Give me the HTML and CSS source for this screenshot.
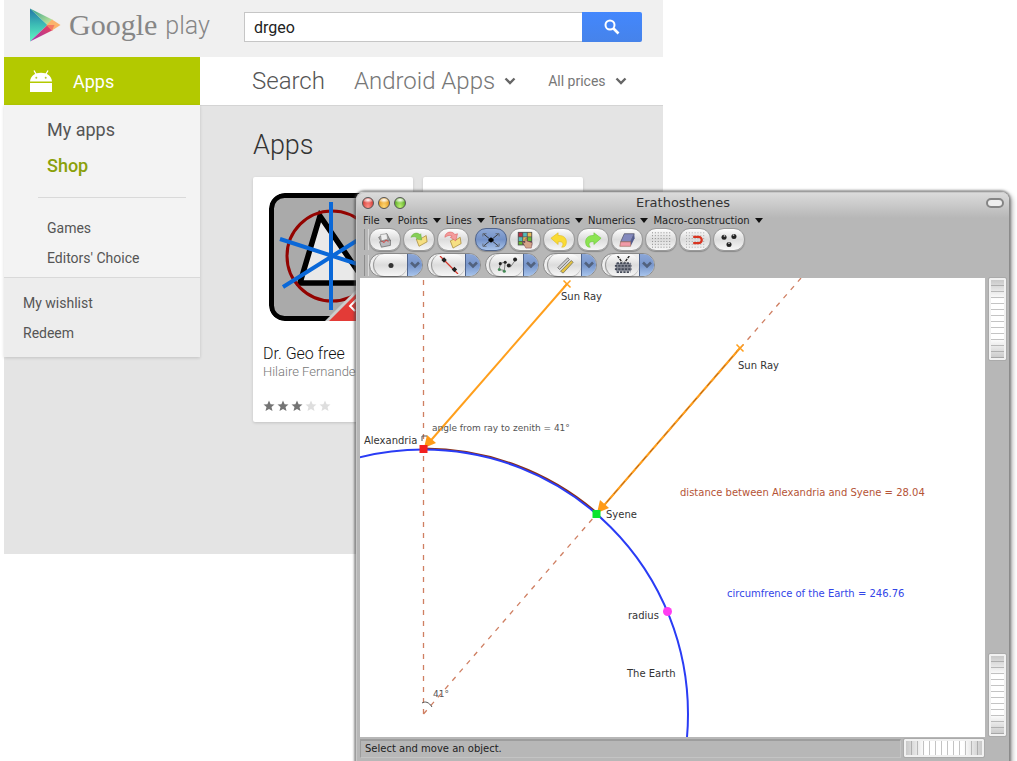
FILE: index.html
```html
<!DOCTYPE html>
<html lang="en">
<head>
<meta charset="utf-8">
<title>Dr. Geo</title>
<link rel="stylesheet" href="styles.css">
</head>
<body>
<div class="desktop">
  <div class="store">
    <header class="store-header">
      <a class="brand" href="#">
        <svg class="brand-mark" viewBox="0 0 32 34" aria-hidden="true">
          <defs>
            <linearGradient id="teal" x1="0" y1="0" x2="0" y2="1"><stop offset="0" stop-color="#2175a8"/><stop offset=".5" stop-color="#3dbdb5"/><stop offset="1" stop-color="#62f5c4"/></linearGradient>
            <linearGradient id="lime" x1="0" y1="0" x2="1" y2="1"><stop offset="0" stop-color="#2a9c8c"/><stop offset="1" stop-color="#d2ee9a"/></linearGradient>
            <linearGradient id="rose" x1="1" y1="0" x2="0" y2="1"><stop offset="0" stop-color="#ee4054"/><stop offset="1" stop-color="#9a35b5"/></linearGradient>
          </defs>
          <path d="M1 .5 18.500 17 1 33.500Z" fill="url(#teal)"/>
          <path d="M1 .5 24 12 18.500 17Z" fill="url(#lime)"/>
          <path d="M1 33.500 18.500 17 24 22Z" fill="url(#rose)"/>
          <path d="M23 11.500 31.500 17 23 22.500 17.500 17Z" fill="#fbb46c"/>
          <path d="M17.500 17h8L23 22.500Z" fill="#f27a62"/>
        </svg>
        <span class="brand-google">Google</span>
        <span class="brand-play">play</span>
      </a>
      <form class="search">
        <input class="search-input" type="text" value="drgeo" aria-label="Search">
        <button class="search-button" type="button" aria-label="Search">
          <svg viewBox="0 0 16 16" width="16" height="16" fill="none" stroke="#fff"><circle cx="6" cy="6" r="4.500" stroke-width="2"/><path d="m9.500 9.500 5 5" stroke-width="2.600"/></svg>
        </button>
      </form>
    </header>
    <div class="store-nav">
      <a class="nav-apps" href="#">
        <svg viewBox="0 0 22 22" width="22" height="22" fill="#fff" aria-hidden="true"><path d="M0 11.500C.5 6 5 2.800 11 2.800S21.500 6 22 11.500z"/><path d="M0 13h22v9H0z"/><path d="m4 .5 2.500 4.500M18 .5 15.500 5" stroke="#fff" stroke-width="1.300"/><circle cx="6.300" cy="7.800" r="1" fill="#b3c833"/><circle cx="15.700" cy="7.800" r="1" fill="#b3c833"/></svg>
        Apps
      </a>
      <div class="filters">
        <span class="filter-title">Search</span>
        <button class="filter filter-large" type="button">Android Apps
          <svg class="chevron" viewBox="0 0 12 8"><path d="m1.500 1.500 4.500 4.500 4.500-4.500"/></svg></button>
        <button class="filter filter-small" type="button">All prices
          <svg class="chevron" viewBox="0 0 12 8"><path d="m1.500 1.500 4.500 4.500 4.500-4.500"/></svg></button>
      </div>
    </div>
    <div class="store-body">
      <nav class="sidebar">
        <div class="side-main">
          <a class="side-link side-big" href="#">My apps</a>
          <a class="side-link side-big side-current" href="#">Shop</a>
          <hr class="side-rule">
          <a class="side-link" href="#">Games</a>
          <a class="side-link" href="#">Editors' Choice</a>
        </div>
        <div class="side-extra">
          <a class="side-link" href="#">My wishlist</a>
          <a class="side-link" href="#">Redeem</a>
        </div>
      </nav>
      <main class="results">
        <h1 class="results-title">Apps</h1>
        <div class="cards">
          <article class="card">
            <svg class="app-icon" viewBox="0 0 128 128" aria-hidden="true">
              <defs><clipPath id="tile"><rect width="128" height="128" rx="16"/></clipPath></defs>
              <g clip-path="url(#tile)">
                <rect x="2.500" y="2.500" width="123" height="123" rx="13" fill="#aaa" stroke="#000" stroke-width="5"/>
                <path d="M51 23 31 90h66z" fill="#e9e9e9" stroke="#000" stroke-width="5.500"/>
                <circle cx="63" cy="63" r="45" fill="none" stroke="#930300" stroke-width="3"/>
                <path d="M62 9v108M11 46 110 78M14 94 108 35" stroke="#0a68d8" stroke-width="4"/>
                <path d="M56 128 128 56v72z" fill="#ccc"/><path d="M60 128 128 60v68z" fill="#e33b37"/>
                <path d="m88 106-7 7 5 5m-5-5 9-9" fill="none" stroke="#fff" stroke-width="2"/>
              </g>
            </svg>
            <h2 class="app-name">Dr. Geo free</h2>
            <p class="app-author">Hilaire Fernandes</p>
            <div class="stars" role="img" aria-label="3 of 5 stars">
              <svg class="star" viewBox="0 0 12 12"><path d="m6 .5 1.600 3.700 3.900.3-3 2.600 1 3.900L6 8.900 2.500 11l1-3.900-3-2.600 3.900-.3z"/></svg>
              <svg class="star" viewBox="0 0 12 12"><path d="m6 .5 1.600 3.700 3.900.3-3 2.600 1 3.900L6 8.900 2.500 11l1-3.900-3-2.600 3.900-.3z"/></svg>
              <svg class="star" viewBox="0 0 12 12"><path d="m6 .5 1.600 3.700 3.900.3-3 2.600 1 3.900L6 8.900 2.500 11l1-3.900-3-2.600 3.900-.3z"/></svg>
              <svg class="star star-off" viewBox="0 0 12 12"><path d="m6 .5 1.600 3.700 3.900.3-3 2.600 1 3.900L6 8.900 2.500 11l1-3.900-3-2.600 3.900-.3z"/></svg>
              <svg class="star star-off" viewBox="0 0 12 12"><path d="m6 .5 1.600 3.700 3.900.3-3 2.600 1 3.900L6 8.900 2.500 11l1-3.900-3-2.600 3.900-.3z"/></svg>
            </div>
          </article>
          <article class="card"></article>
        </div>
      </main>
    </div>
  </div>

  <section class="window">
    <div class="titlebar">
      <div class="lights">
        <button class="light light-red" type="button" aria-label="Close"></button>
        <button class="light light-amber" type="button" aria-label="Minimise"></button>
        <button class="light light-green" type="button" aria-label="Zoom"></button>
      </div>
      <h2 class="window-title">Erathosthenes</h2>
      <button class="window-pill" type="button" aria-label="Toggle toolbar"></button>
    </div>
    <div class="menubar">
      <button class="menu" type="button">File</button>
      <button class="menu" type="button">Points</button>
      <button class="menu" type="button">Lines</button>
      <button class="menu" type="button">Transformations</button>
      <button class="menu" type="button">Numerics</button>
      <button class="menu" type="button">Macro-construction</button>
    </div>
    <div class="toolbar">
      <button class="tool" type="button" aria-label="New"><svg viewBox="0 0 24 20"><path d="m5 7 9-4 4 8-8 5z" fill="#aaa" stroke="#777"/><path d="m7 4 7-1 1 6-7 2z" fill="#eee" stroke="#888" stroke-width=".7"/><path d="m6 12 12-2v6l-10 2z" fill="#b9b9bd" stroke="#666" stroke-width=".8"/><path d="m8 11 3 2 2-3 3 2" fill="none" stroke="#d44"/></svg></button>
      <button class="tool" type="button" aria-label="Open"><svg viewBox="0 0 24 20"><path d="m9 9 4-2 2 1 5-3 1 7-9 5z" fill="#f6df82" stroke="#a48632" stroke-width=".8"/><path d="M3 7c2-5 7-6 10-3l1-1 1 7-6-1 1-1c-2-2-4-2-7-1z" fill="#85cf55" stroke="#61a83b" stroke-width=".5"/></svg></button>
      <button class="tool" type="button" aria-label="Save"><svg viewBox="0 0 24 20"><path d="m9 11 4-2 2 1 5-3 1 7-9 5z" fill="#f6df82" stroke="#a48632" stroke-width=".8"/><path d="M3 7C3 1 11-1 14 4l3-1-2 8-6-4 2-1C9 4 6 5 3 7z" fill="#f49c9c" stroke="#dc5c5c" stroke-width=".6"/></svg></button>
      <button class="tool tool-active" type="button" aria-label="Move"><svg viewBox="0 0 24 20"><path d="M4 3.500 20 16.500M4 16.500 20 3.500" stroke="#333"/><path d="m12 7 3.500 3-3.500 3-3.500-3z" fill="#000"/><path d="M3 6V3h4M21 6V3h-4M3 14v3h4M21 14v3h-4" fill="none" stroke="#555" stroke-width=".8"/></svg></button>
      <button class="tool" type="button" aria-label="Style"><svg viewBox="0 0 24 20"><path fill="#555" d="M4 1h16v15H4z"/><path fill="#b34" d="M5 2h4v4H5z"/><path fill="#5bb" d="M10 2h4v4h-4zM5 7h4v4H5z"/><path fill="#e6b958" d="M15 2h4v4h-4zM10 7h4v4h-4z"/><path fill="#6b3" d="M5 12h4v3H5zM15 7h4v4h-4z"/><path d="m9 12 3 1V9l2-1v3l6 2-1 6h-6z" fill="#d3a58a" stroke="#734" stroke-width=".5"/></svg></button>
      <button class="tool" type="button" aria-label="Undo"><svg viewBox="0 0 24 20"><path d="m3 8 8-6v3c7-.5 10 4 9 9-.5 3-2 4-5 4 3-4 1-7-4-6v3z" fill="#fadb35" stroke="#e0bc23" stroke-width=".7"/></svg></button>
      <button class="tool" type="button" aria-label="Redo"><svg viewBox="0 0 24 20"><path d="m21 8-8-6v3C6 4.500 3 9 4 14c.5 3 2 4 5 4-3-4-1-7 4-6v3z" fill="#8ce452" stroke="#6cc83b" stroke-width=".7"/></svg></button>
      <button class="tool" type="button" aria-label="Erase"><svg viewBox="0 0 24 20"><path d="M9 3h11l-4 9H5z" fill="#8389bd" stroke="#445" stroke-width=".7"/><path d="m20 3 .5 5-4.500 9v-5z" fill="#515a8e"/><path d="M5 12h11v5H4z" fill="#f09aa8" stroke="#965" stroke-width=".7"/></svg></button>
      <button class="tool" type="button" aria-label="Grid"><svg viewBox="0 0 24 20"><path d="M2 2h21M2 5.200h21M2 8.400h21M2 11.600h21M2 14.800h21M2 18h21" stroke="#777" stroke-dasharray="1 2.200"/></svg></button>
      <button class="tool" type="button" aria-label="Snap to grid"><svg viewBox="0 0 24 20"><path d="M2 2h21M2 5.200h21M2 8.400h21M2 11.600h21M2 14.800h21M2 18h21" stroke="#999" stroke-dasharray="1 2.200"/><path d="M10 6.500h6a3.500 3.500 0 0 1 0 7h-6" fill="none" stroke="#d93420" stroke-width="2.500"/></svg></button>
      <button class="tool" type="button" aria-label="Points"><svg viewBox="0 0 24 20"><g fill="#222"><circle cx="6.500" cy="7" r="2.800"/><circle cx="17.500" cy="6" r="2.800"/><circle cx="12" cy="15" r="2.800"/></g><g fill="#bbb"><circle cx="7" cy="5.500" r="1"/><circle cx="17" cy="4.500" r="1"/><circle cx="12" cy="13.500" r="1"/></g></svg></button>
    </div>
    <div class="toolbar toolbar-split">
      <div class="split"><button class="split-main" type="button" aria-label="Point"><svg viewBox="0 0 24 20"><circle cx="12" cy="10.500" r="2.800" fill="#333"/></svg></button><button class="split-arrow" type="button" aria-label="More points"><svg viewBox="0 0 12 8"><path d="m2 1.500 4 4 4-4"/></svg></button></div>
      <div class="split"><button class="split-main" type="button" aria-label="Line"><svg viewBox="0 0 24 20"><path d="m2 0 20 20" stroke="#d23528" stroke-width="1.400"/><g fill="#222"><path d="m6.500 1.500 3 3-3 3-3-3zM18 12l3 3-3 3-3-3z"/></g></svg></button><button class="split-arrow" type="button" aria-label="More lines"><svg viewBox="0 0 12 8"><path d="m2 1.500 4 4 4-4"/></svg></button></div>
      <div class="split"><button class="split-main" type="button" aria-label="Transformation"><svg viewBox="0 0 24 20"><path d="m3 15 2-7 5-1-1 9zM13 10l3 2 5-7" fill="none" stroke="#777"/><g fill="#222"><circle cx="4.500" cy="8.500" r="1.700"/><circle cx="10" cy="7" r="1.700"/><circle cx="14" cy="10.500" r="2.200"/><circle cx="21" cy="4" r="2.200"/></g><circle cx="3.500" cy="15" r="1.700" fill="#485"/><circle cx="9" cy="17" r="1.700" fill="#485"/></svg></button><button class="split-arrow" type="button" aria-label="More transformations"><svg viewBox="0 0 12 8"><path d="m2 1.500 4 4 4-4"/></svg></button></div>
      <div class="split"><button class="split-main" type="button" aria-label="Measure"><svg viewBox="0 0 24 20"><path d="m4 13 11-11 2 2L6 15z" fill="#ccc" stroke="#555" stroke-width=".8"/><path d="m7 17 12-12 2 2L10 19z" fill="#e4c343" stroke="#665" stroke-width=".8"/></svg></button><button class="split-arrow" type="button" aria-label="More measures"><svg viewBox="0 0 12 8"><path d="m2 1.500 4 4 4-4"/></svg></button></div>
      <div class="split"><button class="split-main" type="button" aria-label="Macro"><svg viewBox="0 0 24 20"><path d="M4 8h17v9H4z" fill="#858994"/><path d="M5 8h15M3 11h19M3 14.500h19M5 18h15" stroke="#444a58" stroke-width="2" stroke-dasharray="2.500 1.200"/><path d="m6 0 5 7M19 0l-5 7" stroke="#222" stroke-width="1.500" stroke-dasharray="3 1"/></svg></button><button class="split-arrow" type="button" aria-label="More macros"><svg viewBox="0 0 12 8"><path d="m2 1.500 4 4 4-4"/></svg></button></div>
    </div>
    <div class="workspace">
      <svg class="sketch" viewBox="0 0 625 459">
        <g class="guide"><path d="M63.500 436V0"/><path d="M63.500 436 441 0"/></g>
        <circle class="arc-length" cx="63.500" cy="436" r="265.500"/>
        <circle class="earth" cx="63.500" cy="436" r="264.500"/>
        <g class="ray"><path d="M207 6 66 168"/><path d="M380 70 240 232"/></g>
        <path class="ray-dash" d="M380 70 240 232"/>
        <g class="ray-end"><path d="m203.500 2.500 7 7m0-7-7 7"/><path d="m376.500 66.500 7 7m0-7-7 7"/></g>
        <path class="ray-head" d="m64 170 3-13 9 8zM237 235l3-13 9 8z"/>
        <path d="M59.500 167h8v8h-8z" fill="#f21f1f"/>
        <path d="M232.500 232h8v8h-8z" fill="#0be52b"/>
        <circle cx="307.500" cy="333.500" r="4.500" fill="#ff3df2"/>
        <path class="mark" d="M62 163v-5h5M62 425c3-2 7-1 10 4"/>
        <text x="201" y="22">Sun Ray</text>
        <text x="378" y="91">Sun Ray</text>
        <text class="small" x="72" y="153">angle from ray to zenith = 41°</text>
        <text x="4" y="166">Alexandria</text>
        <text x="246" y="240">Syene</text>
        <text class="rust" x="320" y="218">distance between Alexandria and Syene = 28.04</text>
        <text class="blue" x="367" y="319">circumfrence of the Earth = 246.76</text>
        <text x="268" y="341">radius</text>
        <text x="267" y="399">The Earth</text>
        <text class="small" x="73" y="419">41°</text>
      </svg>
      <div class="wheels">
        <div class="wheel wheel-v"></div>
        <div class="wheel wheel-v"></div>
      </div>
    </div>
    <div class="statusbar">
      <p class="status">Select and move an object.</p>
      <div class="wheel wheel-h"></div>
    </div>
  </section>
</div>
</body>
</html>
```

FILE: styles.css
```css
* { box-sizing: border-box; }
body { margin: 0; background: #fff; font-family: Roboto, sans-serif; color: #555; }
h1, h2, p { margin: 0; font-weight: 400; }
a { color: inherit; text-decoration: none; }
button { border: 0; padding: 0; margin: 0; background: none; font: inherit; color: inherit; }

.desktop { display: grid; min-height: 100vh; overflow: hidden; }
.desktop > * { grid-area: 1 / 1; align-self: start; min-width: 0; }

/* Store page */
.store { width: 64.8%; margin-left: 4px; background: #e4e4e4; }
.store-header { display: flex; height: 57px; padding: 0 21px 0 25px; align-items: center; background: #f0f0f0; }
.brand { display: flex; flex: none; width: 215px; align-items: center; color: #868686; line-height: 34px; }
.brand-mark { width: 32px; height: 34px; margin: 0 8px 8px 0; }
.brand-google { margin-bottom: 8px; font: 30px/34px "Liberation Serif", serif; }
.brand-play { margin: 0 0 6px 8px; font-size: 25px; font-weight: 300; }
.search { display: flex; flex: 1; height: 30px; margin-bottom: 3px; }
.search-input { flex: 1; min-width: 0; padding: 0 9px; border: 1px solid #c6c6c6; border-right: 0; border-radius: 0; background: #fff; font: 16px Roboto, sans-serif; color: #222; }
.search-button { width: 60px; border-radius: 0 2px 2px 0; background: linear-gradient(#4387fd, #4683ea); }
.search-button svg { display: block; margin: auto; }

.store-nav { display: flex; height: 48px; background: #fff; }
.nav-apps { display: flex; flex: none; width: 196px; align-items: center; gap: 21px; padding-left: 26px; background: #b3c900; color: #fff; font-size: 18px; }
.filters { display: flex; flex: 1; height: 49px; align-items: center; padding-left: 52px; border-bottom: 1px solid #d4d4d4; background: #fff; white-space: nowrap; color: #777; }
.filter-title { margin-right: 29px; font-size: 24px; font-weight: 300; color: #555; }
.filter { display: flex; align-items: center; }
.filter-large { gap: 9px; margin-right: 32px; font-size: 24px; font-weight: 300; }
.filter-small { gap: 9px; font-size: 14px; }
.chevron { width: 12px; height: 8px; fill: none; stroke: #666; stroke-width: 2.4; }

.store-body { display: flex; align-items: flex-start; min-height: 449px; }
.sidebar { flex: none; width: 196px; background: #f3f3f3; box-shadow: 0 1px 3px rgba(0, 0, 0, .15); }
.side-link { display: block; font-size: 14px; line-height: 30px; }
.side-main { padding: 7px 14px 4px 34px; }
.side-main .side-link { padding-left: 9px; }
.side-main .side-big { font-size: 18px; line-height: 36px; }
.side-main .side-current { color: #8ba00b; font-weight: 500; }
.side-rule { height: 1px; margin: 13px 0 15px; border: 0; background: #d9d9d9; }
.side-extra { padding: 10px 19px 9px; border-top: 1px solid #d9d9d9; background: #ededed; }

.results { flex: 1; min-width: 0; padding: 20px 0 0 53px; }
.results-title { font-size: 27px; line-height: 40px; font-weight: 300; color: #333; }
.cards { display: flex; gap: 10px; margin-top: 12px; }
.card { flex: none; width: 160px; min-height: 245px; padding: 16px 0 10px 10px; border-radius: 2px; background: #fff; box-shadow: 0 1px 3px rgba(0, 0, 0, .15); overflow: hidden; white-space: nowrap; }
.app-icon { display: block; width: 128px; height: 128px; margin: 0 0 22px 6px; }
.app-name { font-size: 16px; line-height: 22px; font-weight: 300; color: #111; }
.app-author { font-size: 13px; line-height: 14px; font-weight: 300; color: #777; }
.stars { display: flex; gap: 2px; margin-top: 21px; }
.star { width: 12px; height: 12px; fill: #747474; }
.star-off { fill: #dedede; }

/* Geometry window */
.window { margin: 192px 8px 0 356px; padding-left: 4px; border-radius: 8px 8px 0 0; background: linear-gradient(#dcdcdc, #b7b7b7 26px); box-shadow: inset 1px 1px 0 #c8c8c8, 0 0 2px 2px rgba(80, 80, 80, .5), 2px 2px 4px 2px rgba(0, 0, 0, .25); font-family: "DejaVu Sans", sans-serif; font-size: 10px; color: #222; }
.titlebar { display: grid; grid-template-columns: 1fr auto 1fr; height: 22px; align-items: center; padding: 0 5px 0 2px; }
.lights { display: flex; gap: 4px; }
.light { width: 12px; height: 12px; border: 1px solid #555; border-radius: 50%; }
.light-red { background: radial-gradient(ellipse 6px 3px at 50% 20%, #fff, transparent), radial-gradient(at 50% 90%, #ff9188, #c92c27); }
.light-amber { background: radial-gradient(ellipse 6px 3px at 50% 20%, #fff, transparent), radial-gradient(at 50% 90%, #ffd977, #dd8b0c); }
.light-green { background: radial-gradient(ellipse 6px 3px at 50% 20%, #fff, transparent), radial-gradient(at 50% 90%, #bdf272, #479b19); }
.window-title { font-size: 13px; line-height: 22px; color: #333; }
.window-pill { width: 18px; height: 10px; margin-left: auto; border: 2px solid #858585; border-radius: 5px; background: #eee; }
.menubar { display: flex; height: 13px; gap: 5px; padding-left: 3px; align-items: center; }
.menu { display: flex; flex: none; align-items: center; gap: 5px; line-height: 13px; }
.menu::after { content: ""; border: 4px solid transparent; border-top: 5px solid #111; border-bottom: 0; }

.toolbar { display: flex; height: 25px; gap: 2px; padding: 1px 0 1px 4px; align-items: center; }
.toolbar::before { content: ""; width: 3px; height: 21px; margin-right: -2px; border-left: 1px solid #8c8c8c; border-right: 1px solid #d8d8d8; }
.tool, .split-main { display: flex; width: 32px; height: 23px; align-items: center; justify-content: center; border: 1px solid #999; border-radius: 11px; background: linear-gradient(#fdfdfd, #dcdcdc 50%, #f6f6f6); box-shadow: 0 1px 1px rgba(0, 0, 0, .25); }
.tool svg, .split-main svg { width: 22px; height: 18px; }
.tool-active { margin-left: 4px; background: linear-gradient(#8fa9d6, #7391c7 50%, #a9c4ea); border-color: #4f648c; }
.toolbar-split { height: 26px; gap: 4px; }
.toolbar-split::before { margin-right: -4px; }
.split { display: flex; width: 54px; border: 1px solid #888; border-radius: 12px; background: #eee; }
.split-main { width: 34px; height: 22px; margin-left: 3px; border-width: 0 0 0 1px; }
.split-arrow { display: flex; flex: 1; align-items: center; justify-content: center; border-left: 1px solid #4f648c; border-radius: 0 11px 11px 0; background: linear-gradient(#8ca7d8, #7896cb 50%, #a6c3ec); }
.split-arrow svg { width: 12px; height: 8px; fill: none; stroke: #52627e; stroke-width: 2.6; }

.workspace { display: grid; grid-template-columns: 1fr 24px; }
.sketch { display: block; width: 100%; background: #fff; }
.sketch text { font: 10px "DejaVu Sans", sans-serif; fill: #333; }
.sketch .small { font-size: 9px; fill: #555; }
.sketch .rust { fill: #b55436; }
.sketch .blue { fill: #3346e8; }
.guide { fill: none; stroke: #cf7f62; stroke-width: 1.3; stroke-dasharray: 5 6; }
.earth { fill: none; stroke: #2a3cf5; stroke-width: 2; }
.arc-length { fill: none; stroke: #8a3018; stroke-width: 2; stroke-dasharray: 0 1251 190 2000; }
.ray { fill: none; stroke: #ff9f1c; stroke-width: 2; }
.ray-dash { fill: none; stroke: #b0601c; stroke-width: 1; stroke-dasharray: 6 5; }
.ray-end { fill: none; stroke: #ff9f1c; stroke-width: 1.5; }
.ray-head { fill: #ff9a16; }
.mark { fill: none; stroke: #555; stroke-width: 1; }
.wheels { display: flex; flex-direction: column; justify-content: space-between; align-items: center; padding: 0 3px 1px; }
.wheel { border: 2px solid #f1f1f1; outline: 1px solid #aaa; border-radius: 1px; }
.wheel-v { width: 17px; height: 82px; background: linear-gradient(rgba(120, 120, 120, .4), transparent 25%, transparent 75%, rgba(120, 120, 120, .4)), repeating-linear-gradient(#fff 0 5px, #c4c4c4 5px 6px); }
.wheel-h { width: 80px; height: 18px; background: linear-gradient(90deg, rgba(120, 120, 120, .4), transparent 25%, transparent 75%, rgba(120, 120, 120, .4)), repeating-linear-gradient(90deg, #fff 0 5px, #c4c4c4 5px 6px); }
.statusbar { display: flex; gap: 3px; padding: 2px 25px 4px 0; }
.status { flex: 1; padding-left: 4px; border: 1px solid #c4c4c4; border-top: 2px solid #9d9d9d; border-left-color: #9d9d9d; line-height: 16px; }
```
